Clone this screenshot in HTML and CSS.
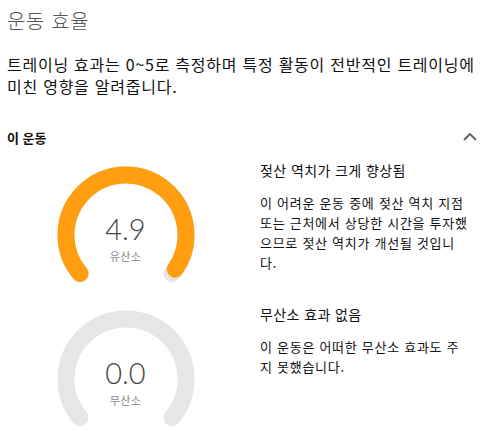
FILE: index.html
```html
<!DOCTYPE html>
<html lang="ko">
<head>
  <meta charset="UTF-8">
  <title>운동 효율</title>
  <link rel="stylesheet" href="styles.css">
</head>
<body>
  <h1 class="title">운동 효율</h1>
  <p class="intro">트레이닝 효과는 0~5로 측정하며 특정 활동이 전반적인 트레이닝에 미친 영향을 알려줍니다.</p>

  <div class="section-head">
    <span>이 운동</span>
    <svg class="chevron" width="14" height="8" viewBox="0 0 14 8">
      <polyline points="1,7 7,1 13,7" fill="none" stroke="#666" stroke-width="2"/>
    </svg>
  </div>

  <div class="effect">
    <div class="gauge-col">
      <div class="gauge">
        <svg width="140" height="140" viewBox="0 0 140 140">
          <path d="M24.04 108.57 A60 60 0 1 1 115.96 108.57" class="track"/>
          <path d="M24.04 108.57 A60 60 0 1 1 119.27 104.24" class="fill"/>
        </svg>
        <div class="gauge-value">4.9</div>
        <div class="gauge-label">유산소</div>
      </div>
    </div>
    <div class="effect-text">
      <h3>젖산 역치가 크게 향상됨</h3>
      <p>이 어려운 운동 중에 젖산 역치 지점 또는 근처에서 상당한 시간을 투자했으므로 젖산 역치가 개선될 것입니다.</p>
    </div>
  </div>

  <div class="effect">
    <div class="gauge-col">
      <div class="gauge">
        <svg width="140" height="140" viewBox="0 0 140 140">
          <path d="M24.04 108.57 A60 60 0 1 1 115.96 108.57" class="track"/>
        </svg>
        <div class="gauge-value">0.0</div>
        <div class="gauge-label">무산소</div>
      </div>
    </div>
    <div class="effect-text">
      <h3>무산소 효과 없음</h3>
      <p>이 운동은 어떠한 무산소 효과도 주지 못했습니다.</p>
    </div>
  </div>
</body>
</html>
```

FILE: styles.css
```css
body {
  margin: 0;
  padding: 0 8px 0 7px;
  font-family: "Noto Sans CJK KR", "Noto Sans", sans-serif;
  color: #111;
  background: #fff;
  overflow: hidden;
}
.title {
  margin: 9px 0 0;
  font-size: 20px;
  line-height: 24px;
  font-weight: 300;
  letter-spacing: 0.6px;
  color: #555;
}
.intro {
  margin: 20px 0 0;
  font-size: 16px;
  line-height: 22px;
  letter-spacing: 0.75px;
}
.section-head {
  display: flex;
  justify-content: space-between;
  align-items: center;
  margin-top: 30px;
  height: 20px;
  font-size: 13px;
  font-weight: bold;
}
.chevron {
  margin-right: 5px;
}
.effect {
  display: grid;
  grid-template-columns: 237px 210px;
  column-gap: 16px;
  height: 144px;
}
.section-head + .effect {
  margin-top: 14px;
}
.gauge {
  position: relative;
  width: 140px;
  height: 140px;
  margin: 4px auto 0;
}
.gauge svg {
  display: block;
}
.track {
  fill: none;
  stroke: #e6e6e6;
  stroke-width: 17;
  stroke-linecap: round;
}
.fill {
  fill: none;
  stroke: #ff9e10;
  stroke-width: 17;
  stroke-linecap: round;
}
.gauge-value {
  position: absolute;
  left: 0;
  right: 0;
  top: 49px;
  text-align: center;
  font-family: Lato, "Noto Sans", sans-serif;
  font-weight: 300;
  font-size: 29px;
  line-height: 29px;
  color: #444;
}
.gauge-label {
  position: absolute;
  left: 0;
  right: 0;
  top: 86px;
  text-align: center;
  font-size: 11px;
  line-height: 11px;
  letter-spacing: 0.3px;
  color: #888;
}
.effect-text h3 {
  margin: 0;
  font-size: 14px;
  line-height: 18px;
  font-weight: normal;
  letter-spacing: 0.4px;
}
.effect-text p {
  margin: 14px 0 0;
  font-size: 13px;
  line-height: 20px;
  letter-spacing: 0.72px;
}
```
